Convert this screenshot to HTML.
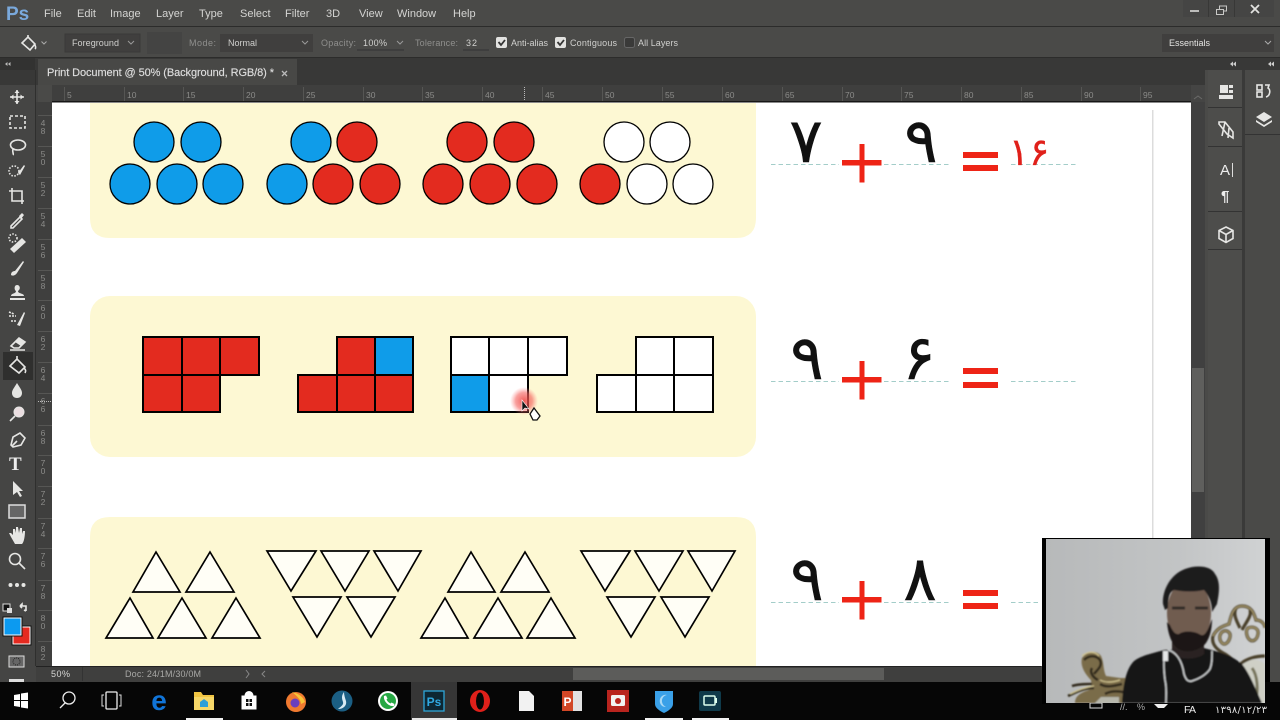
<!DOCTYPE html>
<html>
<head>
<meta charset="utf-8">
<style>
html,body{margin:0;padding:0;background:#000;width:1280px;height:720px;overflow:hidden}
svg{display:block}
text{font-family:"Liberation Sans",sans-serif}
.m{font-size:11px;fill:#d4d4d2}
.o{font-size:9px;fill:#d0d0ce}
.d{font-size:9px;fill:#8f8f8d}
.r{font-size:8.5px;fill:#8b8b89}
.n{font-family:"DejaVu Sans",sans-serif;font-size:62px;fill:#111;stroke:#111;stroke-width:.6;text-anchor:middle}
.c{stroke:#000;stroke-width:1.3}
.s{stroke:#000;stroke-width:2;fill:#fff}
.t{stroke:#000;stroke-width:1.7;fill:#fffef6;stroke-linejoin:miter}
.i{fill:none;stroke:#e6e6e4;stroke-width:1.6}
.f{fill:#e6e6e4}
</style>
</head>
<body>
<svg width="1280" height="720" viewBox="0 0 1280 720" xmlns="http://www.w3.org/2000/svg">
<defs>
<filter id="b1"><feGaussianBlur stdDeviation="0.9"/></filter>
<linearGradient id="wall" x1="0" y1="0" x2="1" y2="0"><stop offset="0" stop-color="#b7b9ba"/><stop offset="0.6" stop-color="#c2c4c5"/><stop offset="1" stop-color="#d0d2d3"/></linearGradient>
<radialGradient id="spot"><stop offset="0" stop-color="#f0403c" stop-opacity=".85"/><stop offset=".6" stop-color="#f4605c" stop-opacity=".6"/><stop offset="1" stop-color="#f88" stop-opacity="0"/></radialGradient>
</defs>

<!-- chrome -->
<rect width="1280" height="720" fill="#454544"/>
<rect y="0" width="1280" height="26" fill="#4a4a48"/>
<rect y="26" width="1280" height="1" fill="#2c2c2b"/>
<rect y="27" width="1280" height="30" fill="#4a4a48"/>
<rect y="57" width="1280" height="1" fill="#2c2c2b"/>
<rect x="0" y="58" width="1280" height="27" fill="#383837"/>
<rect x="0" y="58" width="35" height="12" fill="#323231"/>
<rect x="38" y="59" width="259" height="26" fill="#484846"/>
<rect x="38" y="85" width="1153" height="17" fill="#3f3f3e"/>
<rect x="38" y="85" width="14" height="17" fill="#4a4a48"/>
<rect x="36" y="102" width="16" height="564" fill="#3f3f3e"/>
<rect x="35" y="70" width="1" height="612" fill="#2f2f2e"/>

<!-- Menu -->
<text x="6" y="20" style="font-size:19px;font-weight:bold;fill:#7aa9dc">Ps</text>
<text x="44" y="17" class="m">File</text>
<text x="77" y="17" class="m">Edit</text>
<text x="110" y="17" class="m">Image</text>
<text x="156" y="17" class="m">Layer</text>
<text x="199" y="17" class="m">Type</text>
<text x="240" y="17" class="m">Select</text>
<text x="285" y="17" class="m">Filter</text>
<text x="326" y="17" class="m">3D</text>
<text x="359" y="17" class="m">View</text>
<text x="397" y="17" class="m">Window</text>
<text x="453" y="17" class="m">Help</text>

<!-- Window controls -->
<rect x="1183" y="0" width="91" height="17" fill="#454544"/>
<path d="M1208.500 0v17M1234.500 0v17" stroke="#383837"/>
<rect x="1190" y="10" width="9" height="2" fill="#bdbdbb"/>
<path d="M1216.500 9.500h7v5h-7zM1219.500 9v-3h7v5h-3" fill="none" stroke="#c8c8c6"/>
<path d="M1251 5l8 8M1259 5l-8 8" stroke="#e2e2e0" stroke-width="1.800"/>

<!-- Options -->
<g transform="translate(20,35)"><path d="M2 8l6-6 7 7-5 6z" class="i"/><path d="M8 2V0" class="i"/><path d="M14 9c2 2 2 4 1 5" class="i"/></g>
<path d="M41.500 41.500l2.500 2.500 2.500-2.500" fill="none" stroke="#aaa"/>
<rect x="65" y="34" width="75" height="18" fill="#403f3e" stroke="#3a3a39"/>
<text x="72" y="46" class="o" textLength="47">Foreground</text>
<path d="M128 41l3 3 3-3" fill="none" stroke="#999"/>
<rect x="147" y="32" width="35" height="22" fill="#444443"/>
<text x="189" y="46" class="d" textLength="27">Mode:</text>
<rect x="220" y="34" width="93" height="18" fill="#403f3e"/>
<text x="228" y="46" class="o" textLength="29">Normal</text>
<path d="M302 41l3 3 3-3" fill="none" stroke="#999"/>
<text x="321" y="46" class="d" textLength="35">Opacity:</text>
<text x="363" y="46" class="o" textLength="24">100%</text>
<path d="M357 50h47" stroke="#333"/>
<path d="M397 41l3 3 3-3" fill="none" stroke="#999"/>
<text x="415" y="46" class="d" textLength="43">Tolerance:</text>
<text x="466" y="46" class="o" textLength="11">32</text>
<path d="M463 50h26" stroke="#333"/>
<rect x="496" y="37" width="11" height="11" rx="2" fill="#e2e2e0"/><path d="M498.500 42l2.500 3 4-5" stroke="#333" stroke-width="1.800" fill="none"/>
<text x="511" y="46" class="o" textLength="37">Anti-alias</text>
<rect x="555" y="37" width="11" height="11" rx="2" fill="#e2e2e0"/><path d="M557.500 42l2.500 3 4-5" stroke="#333" stroke-width="1.800" fill="none"/>
<text x="570" y="46" class="o" textLength="47">Contiguous</text>
<rect x="624.500" y="37.500" width="10" height="10" rx="2" fill="#3a3a39" stroke="#666"/>
<text x="638" y="46" class="o" textLength="40">All Layers</text>
<rect x="1162" y="34" width="112" height="18" fill="#403f3e"/>
<text x="1169" y="46" class="o" style="fill:#e4e4e2" textLength="41">Essentials</text>
<path d="M1265 41l3 3 3-3" fill="none" stroke="#aaa"/>

<!-- tab -->
<path d="M5 64l2.500-2v4zM8 64l2.500-2v4" fill="#bbb"/>
<text x="47" y="76" style="font-size:11px;fill:#dedede;stroke:#dedede;stroke-width:.15" textLength="227">Print Document @ 50% (Background, RGB/8) *</text>
<path d="M282 71l5 5M287 71l-5 5" stroke="#bbb" stroke-width="1.300"/>

<!-- top ruler -->
<g>
<text x="67" y="98" class="r">5</text><text x="127" y="98" class="r">10</text><text x="186" y="98" class="r">15</text><text x="246" y="98" class="r">20</text><text x="306" y="98" class="r">25</text><text x="366" y="98" class="r">30</text><text x="425" y="98" class="r">35</text><text x="485" y="98" class="r">40</text><text x="545" y="98" class="r">45</text><text x="605" y="98" class="r">50</text><text x="665" y="98" class="r">55</text><text x="725" y="98" class="r">60</text><text x="785" y="98" class="r">65</text><text x="845" y="98" class="r">70</text><text x="904" y="98" class="r">75</text><text x="964" y="98" class="r">80</text><text x="1024" y="98" class="r">85</text><text x="1084" y="98" class="r">90</text><text x="1143" y="98" class="r">95</text>
</g>
<path d="M64.500 87v14M124.500 87v14M183.500 87v14M243.500 87v14M303.500 87v14M363.500 87v14M422.500 87v14M482.500 87v14M542.500 87v14M602.500 87v14M662.500 87v14M722.500 87v14M782.500 87v14M842.500 87v14M901.500 87v14M961.500 87v14M1021.500 87v14M1081.500 87v14M1140.500 87v14" stroke="#565654"/>
<path d="M524.500 87v14" stroke="#bbb" stroke-dasharray="1 1"/>

<!-- left ruler -->
<g style="text-anchor:middle">
<text x="43" y="126" class="r">4</text><text x="43" y="134" class="r">8</text>
<text x="43" y="157" class="r">5</text><text x="43" y="165" class="r">0</text>
<text x="43" y="188" class="r">5</text><text x="43" y="196" class="r">2</text>
<text x="43" y="219" class="r">5</text><text x="43" y="227" class="r">4</text>
<text x="43" y="250" class="r">5</text><text x="43" y="258" class="r">6</text>
<text x="43" y="281" class="r">5</text><text x="43" y="289" class="r">8</text>
<text x="43" y="311" class="r">6</text><text x="43" y="319" class="r">0</text>
<text x="43" y="342" class="r">6</text><text x="43" y="350" class="r">2</text>
<text x="43" y="373" class="r">6</text><text x="43" y="381" class="r">4</text>
<text x="43" y="404" class="r">6</text><text x="43" y="412" class="r">6</text>
<text x="43" y="436" class="r">6</text><text x="43" y="444" class="r">8</text>
<text x="43" y="466" class="r">7</text><text x="43" y="474" class="r">0</text>
<text x="43" y="497" class="r">7</text><text x="43" y="505" class="r">2</text>
<text x="43" y="529" class="r">7</text><text x="43" y="537" class="r">4</text>
<text x="43" y="559" class="r">7</text><text x="43" y="567" class="r">6</text>
<text x="43" y="591" class="r">7</text><text x="43" y="599" class="r">8</text>
<text x="43" y="621" class="r">8</text><text x="43" y="629" class="r">0</text>
<text x="43" y="652" class="r">8</text><text x="43" y="660" class="r">2</text>
</g>
<path d="M38 115.500h14M38 146.500h14M38 177.500h14M38 208.500h14M38 239.500h14M38 270.500h14M38 300.500h14M38 331.500h14M38 362.500h14M38 393.500h14M38 425.500h14M38 455.500h14M38 486.500h14M38 518.500h14M38 548.500h14M38 580.500h14M38 610.500h14M38 641.500h14" stroke="#565654"/>
<path d="M38 401.500h14" stroke="#bbb" stroke-dasharray="1 1"/>

<!-- canvas -->
<rect x="52" y="102" width="1139" height="564" fill="#fff"/>
<rect x="52" y="101" width="1139" height="1.500" fill="#161616"/>
<rect x="1152" y="110" width="1.500" height="428" fill="#dcdcdc"/>

<!-- cards -->
<path d="M90 103H756V218Q756 238 736 238H110Q90 238 90 218Z" fill="#fdf8d3"/>
<rect x="90" y="296" width="666" height="161" rx="20" fill="#fdf8d3"/>
<path d="M90 666V537Q90 517 110 517H736Q756 517 756 537V666Z" fill="#fdf8d3"/>

<!-- circles -->
<g class="c">
<g fill="#0f9ce9"><circle cx="154" cy="142" r="20"/><circle cx="201" cy="142" r="20"/><circle cx="130" cy="184" r="20"/><circle cx="177" cy="184" r="20"/><circle cx="223" cy="184" r="20"/><circle cx="311" cy="142" r="20"/><circle cx="287" cy="184" r="20"/></g>
<g fill="#e32b1f"><circle cx="357" cy="142" r="20"/><circle cx="333" cy="184" r="20"/><circle cx="380" cy="184" r="20"/><circle cx="467" cy="142" r="20"/><circle cx="514" cy="142" r="20"/><circle cx="443" cy="184" r="20"/><circle cx="490" cy="184" r="20"/><circle cx="537" cy="184" r="20"/><circle cx="600" cy="184" r="20"/></g>
<g fill="#fff"><circle cx="624" cy="142" r="20"/><circle cx="670" cy="142" r="20"/><circle cx="647" cy="184" r="20"/><circle cx="693" cy="184" r="20"/></g>
</g>

<!-- squares -->
<g class="s">
<rect x="143" y="337" width="39" height="38" style="fill:#e32b1f"/><rect x="182" y="337" width="38" height="38" style="fill:#e32b1f"/><rect x="220" y="337" width="39" height="38" style="fill:#e32b1f"/><rect x="143" y="375" width="39" height="37" style="fill:#e32b1f"/><rect x="182" y="375" width="38" height="37" style="fill:#e32b1f"/>
<rect x="337" y="337" width="38" height="38" style="fill:#e32b1f"/><rect x="298" y="375" width="39" height="37" style="fill:#e32b1f"/><rect x="337" y="375" width="38" height="37" style="fill:#e32b1f"/><rect x="375" y="375" width="38" height="37" style="fill:#e32b1f"/>
<rect x="375" y="337" width="38" height="38" style="fill:#0f9ce9"/>
<rect x="451" y="337" width="38" height="38"/><rect x="489" y="337" width="39" height="38"/><rect x="528" y="337" width="39" height="38"/>
<rect x="451" y="375" width="38" height="37" style="fill:#0f9ce9"/><rect x="489" y="375" width="39" height="37"/>
<rect x="636" y="337" width="38" height="38"/><rect x="674" y="337" width="39" height="38"/><rect x="597" y="375" width="39" height="37"/><rect x="636" y="375" width="38" height="37"/><rect x="674" y="375" width="39" height="37"/>
</g>
<circle cx="524" cy="401" r="14" fill="url(#spot)"/>
<path d="M522 400v11l3-3 4 1z" fill="#111" stroke="#fff" stroke-width=".6"/>
<path d="M530 414l4-6 6 8-3 4h-4z" fill="#fff" stroke="#111" stroke-width="1.300"/>

<!-- triangles -->
<g class="t">
<path d="M156 552L180 592H133Z"/><path d="M210 552L234 592H186Z"/><path d="M130 598L153 638H106Z"/><path d="M182 598L206 638H158Z"/><path d="M236 598L260 638H212Z"/>
<path d="M267 551H316L291 591Z"/><path d="M321 551H369L345 591Z"/><path d="M374 551H421L398 591Z"/><path d="M293 597H341L317 637Z"/><path d="M347 597H395L371 637Z"/>
<path d="M471 552L495 592H448Z"/><path d="M525 552L549 592H501Z"/><path d="M445 598L468 638H421Z"/><path d="M498 598L522 638H474Z"/><path d="M551 598L575 638H527Z"/>
<path d="M581 551H630L605 591Z"/><path d="M635 551H683L659 591Z"/><path d="M688 551H735L712 591Z"/><path d="M607 597H655L631 637Z"/><path d="M661 597H709L685 637Z"/>
</g>

<!-- equation rows -->
<g stroke="#a3cdc9" stroke-width="1" stroke-dasharray="4.500 3">
<path d="M771 164.500h68M884 164.500h65M1011 164.500h65"/>
<path d="M771 381.500h68M884 381.500h65M1011 381.500h65"/>
<path d="M771 602.500h68M884 602.500h65M1011 602.500h30"/>
</g>
<g fill="#ee2416">
<path d="M859.500 144h5v16h17v5.500h-17v17h-5v-17H842V160h17.500z"/>
<path d="M859.500 361h5v16h17v5.500h-17v17h-5v-17H842V377h17.500z"/>
<path d="M859.500 581h5v16h17v5.500h-17v17h-5v-17H842V597h17.500z"/>
<rect x="963" y="152" width="35" height="6"/><rect x="963" y="165" width="35" height="6"/>
<rect x="963" y="368" width="35" height="6"/><rect x="963" y="382" width="35" height="6"/>
<rect x="963" y="590" width="35" height="6"/><rect x="963" y="603" width="35" height="6"/>
</g>
<text x="806" y="162" class="n">۷</text>
<text x="921" y="162" class="n">۹</text>
<text x="807" y="379" class="n">۹</text>
<text x="919" y="379" class="n">۶</text>
<text x="807" y="600" class="n">۹</text>
<text x="920" y="600" class="n">۸</text>
<text x="1029" y="165" class="n" style="font-size:38px;fill:#e0201a;stroke:#e0201a;stroke-width:.3">۱۶</text>

<!-- right scrollbar & panels -->
<rect x="1191" y="102" width="14" height="436" fill="#404040"/>
<path d="M1194 99l4-3 4 3" fill="none" stroke="#6a6a68"/>
<rect x="1192" y="368" width="12" height="124" fill="#5f5f5d"/>
<rect x="1205" y="58" width="75" height="624" fill="#4a4a48"/>
<rect x="1205" y="58" width="75" height="12" fill="#383837"/>
<rect x="1208" y="70" width="34" height="612" fill="#4d4d4b"/>
<rect x="1242" y="70" width="3" height="612" fill="#3a3a39"/>
<path d="M1208 107.500h34M1208 146.500h34M1208 211.500h34M1208 249.500h34M1245 134.500h35" stroke="#333"/>
<path d="M1236 61.500l-3 2.500 3 2.500zM1233 61.500l-3 2.500 3 2.500zM1274 61.500l-3 2.500 3 2.500zM1271 61.500l-3 2.500 3 2.500z" fill="#ccc"/>
<g class="f"><rect x="1219" y="95" width="14" height="4"/><rect x="1220" y="85" width="8" height="8"/><rect x="1229" y="85" width="4" height="3"/><rect x="1229" y="90" width="4" height="3"/></g>
<g><rect x="1257" y="85" width="5" height="5" class="i"/><rect x="1257" y="92" width="5" height="5" class="i"/><path d="M1265 85h4l-1 3c3 2 2 8-2 9" class="i"/></g>
<path d="M1264 112l8 5-8 5-8-5z" class="f"/><path d="M1256 120l8 5 8-5v2l-8 5-8-5z" class="f"/>
<path d="M1219 124l8 10 6 4v-6l-8-10h-6zM1225 122l-3 14M1229 128l-1 10" class="i" stroke-width="1.200"/>
<text x="1220" y="175" style="font-size:15px;fill:#eee">A</text><rect x="1232" y="163" width="1" height="14" fill="#ddd"/>
<text x="1221" y="201" style="font-size:15px;font-weight:bold;fill:#eee">¶</text>
<path d="M1226 227l7 3.500v8l-7 4-7-4v-8zM1219 230.500l7 4 7-4M1226 234.500v8" class="i"/>

<!-- status bar -->
<rect x="0" y="666" width="36" height="16" fill="#454544"/>
<rect x="36" y="666" width="1005" height="1" fill="#222"/>
<rect x="36" y="667" width="1005" height="15" fill="#3f3f3e"/>
<rect x="573" y="668" width="311" height="12" fill="#5c5c5a"/>
<text x="51" y="677" class="o" textLength="19" style="fill:#d8d8d6">50%</text>
<text x="125" y="677" class="o" textLength="76" style="fill:#a8a8a6">Doc: 24/1M/30/0M</text>
<path d="M246 670l3 4-3 4M265 671l-3 3 3 3" fill="none" stroke="#888"/>
<path d="M82.500 667v14" stroke="#333"/>

<!-- tools -->
<rect x="3" y="352" width="30" height="28" fill="#2f2f2e"/>
<path d="M17 90v14M10 97h14" class="i"/><path d="M14.500 93l2.500-3 2.500 3M14.500 101l2.500 3 2.500-3M13.500 94.500l-3 2.500 3 2.500M20.500 94.500l3 2.500-3 2.500" fill="#e6e6e4"/>
<rect x="10" y="116" width="15" height="12" class="i" stroke-dasharray="3 2"/>
<ellipse cx="18" cy="145" rx="7.500" ry="5" class="i"/><path d="M13 149c-1 3 1 5 0 6" class="i"/>
<circle cx="14" cy="171" r="5" class="i" stroke-dasharray="1.500 1.500"/><path d="M18 173l6-8 1 1-5 9z" class="f"/>
<path d="M12 188v13h12M9 191h13v13" class="i" stroke-width="2"/>
<path d="M11 226l9-9 2 2-9 9h-2z" class="i"/><path d="M19 216l3-3 2 2-3 4z" class="f"/>
<path d="M10 249l12-11 4 4-12 11z" class="f"/><circle cx="13" cy="238" r="4" class="i" stroke-dasharray="1.500 1.500"/>
<path d="M11 275c0-3 2-4 4-4l8-10 1 1-7 11c-2 3-5 3-6 2z" class="f"/>
<path d="M10 298h15v2H10z" class="f"/><path d="M11 296c0-3 5-2 5-5-2-1-2-6 1-6s4 4 1 6c0 3 6 2 6 5z" class="f"/>
<path d="M17 325l7-13 1 1-5 13z" class="f"/><path d="M9 316h7M11 321h5M9 312l5 2" class="i" stroke-dasharray="2 1"/>
<path d="M11 346l8-8 6 4-6 6h-5zM10 350h15" class="i"/><path d="M19 338l6 4-4 4-6-4z" class="f"/>
<path d="M10 366l7-7 8 8-6 6zM17 359v-3M24 368c2 2 2 3 1 5" class="i"/>
<path d="M17 383c-3 5-5 7-5 10s2 5 5 5 5-2 5-5-2-5-5-10z" class="f"/>
<circle cx="19" cy="412" r="5" fill="#eadde0" stroke="#e6e6e4"/><path d="M15 416l-5 5" class="i" stroke-width="2"/>
<path d="M11 445l2-8 7-4 5 5-4 7-8 2zM12 446l5-5" class="i"/>
<text x="9" y="470" style="font-size:19px;font-weight:bold;font-family:'Liberation Serif',serif;fill:#eee">T</text>
<path d="M13 481v14l4-3 3 5 2-1-3-5h4z" class="f"/>
<rect x="9" y="505" width="16" height="13" fill="#666" stroke="#ddd" stroke-width="1.500"/>
<path d="M11 537l-2-4 2 0 2 2v-6l2 0 1 4v-6h2l1 6 1-5h2l0 6 1-3h2c0 5-1 11-3 13h-7z" class="f"/>
<circle cx="15" cy="559" r="5.500" class="i" stroke-width="2"/><path d="M19 563l6 6" class="i" stroke-width="2.500"/>
<circle cx="10.500" cy="585" r="2" class="f"/><circle cx="17" cy="585" r="2" class="f"/><circle cx="23.500" cy="585" r="2" class="f"/>
<rect x="3" y="604" width="7" height="7" fill="#111" stroke="#ddd"/><rect x="7" y="608" width="5" height="5" fill="#ddd"/>
<path d="M20 606l2-2v2h4v5M26 611l-2-1M20 606l2 2" class="i" stroke-width="1.200"/>
<rect x="13" y="627" width="17" height="17" fill="#e52a20" stroke="#fff"/><rect x="12" y="626" width="19" height="19" fill="none" stroke="#111"/>
<rect x="4" y="618" width="17" height="17" fill="#0c9af0" stroke="#fff"/><rect x="3" y="617" width="19" height="19" fill="none" stroke="#111"/>
<rect x="9" y="656" width="15" height="11" fill="#666" stroke="#ddd"/><circle cx="16.500" cy="661.500" r="3.500" fill="none" stroke="#222" stroke-dasharray="1 1"/>
<rect x="9" y="679" width="15" height="3" fill="#ddd"/>

<!-- taskbar -->
<rect x="0" y="682" width="1280" height="38" fill="#060606"/>
<rect x="411" y="682" width="46" height="38" fill="#363636"/>
<rect x="186" y="718" width="37" height="2" fill="#f2f2f2"/>
<rect x="412" y="718" width="45" height="2" fill="#e8e8e8"/>
<rect x="645" y="718" width="38" height="2" fill="#f2f2f2"/>
<rect x="692" y="718" width="37" height="2" fill="#f2f2f2"/>

<g fill="#fff"><path d="M14 695l6-1v6h-6zM21 693.500l7-1v7.500h-7zM14 701h6v6l-6-1zM21 701h7v7.500l-7-1z"/></g>
<circle cx="69" cy="698" r="6" fill="none" stroke="#eee" stroke-width="1.300"/><path d="M65 703l-5 5" stroke="#eee" stroke-width="1.300"/>
<rect x="106" y="692" width="11" height="17" rx="1" fill="none" stroke="#eee" stroke-width="1.300"/><path d="M104 695h-2v11h2M119 695h2v11h-2" fill="none" stroke="#ddd"/>
<text x="159" y="710" style="font-size:28px;font-weight:bold;fill:#1074d8;text-anchor:middle">e</text>
<path d="M194 692h7l2 3h11v4h-20z" fill="#f0c442"/><path d="M194 697h20v13h-20z" fill="#f6d768"/><path d="M200 702l4-3 4 3v5h-8z" fill="#2d9fd8"/>
<path d="M242 696h14v13h-14zM245 696c0-6 8-6 8 0" fill="#fff" stroke="#fff"/><path d="M246 699h2.500v3H246zM249.500 699h2.500v3h-2.500zM246 703h2.500v3H246zM249.500 703h2.500v3h-2.500z" fill="#111"/>
<circle cx="296" cy="702" r="10" fill="#f07a30"/><path d="M292 692c5 1 11 4 13 10l-4 2c0-4-4-8-9-12z" fill="#f8c437"/><circle cx="295" cy="703" r="4.500" fill="#6a3fc0"/>
<circle cx="342" cy="701" r="10.500" fill="#1b5f84"/><path d="M344 692c-3 4-2 7-1 10 1 3-3 5-5 7 6 0 9-4 8-8-1-3-2-6-2-9z" fill="#d8ecf5"/>
<circle cx="388" cy="701" r="10" fill="#fff"/><circle cx="388" cy="701" r="8" fill="#27a844"/><path d="M384 696l2-.5 1.500 3-1 1c1 2 2 3 4 4l1-1 3 1.500-.5 2c-5 1-11-5-10-10z" fill="#fff"/>
<rect x="424" y="691" width="20" height="20" fill="#0d2733" stroke="#2ea6d8" stroke-width="1.300"/>
<text x="434" y="706" style="font-size:12px;font-weight:bold;fill:#30a8e0;text-anchor:middle">Ps</text>
<ellipse cx="480" cy="701" rx="10" ry="11" fill="#e0201a"/><ellipse cx="480" cy="701" rx="4" ry="8.500" fill="#060606"/>
<path d="M519 691h10l5 5v15h-15z" fill="#f2f2f2"/>
<rect x="562" y="691" width="20" height="20" fill="#e2e2e2"/><path d="M562 691h11v20h-11z" fill="#d24726"/>
<text x="567.500" y="706" style="font-size:12px;font-weight:bold;fill:#fff;text-anchor:middle">P</text>
<rect x="607" y="690" width="22" height="22" fill="#b8241e"/><rect x="611" y="695" width="14" height="11" rx="1.500" fill="#f2f2f2"/><circle cx="618" cy="701" r="3" fill="#b8241e"/>
<path d="M655 691h18v13c0 4-5 7-9 9-4-2-9-5-9-9z" fill="#3aa0e8"/><path d="M667 695c-6 1-7 9-1 12-5 0-7-4-6-8 1-3 4-5 7-4z" fill="#a8d8f5"/>
<rect x="699" y="691" width="22" height="20" rx="2" fill="#0f3a4a"/><rect x="704" y="696" width="11" height="9" rx="1" fill="none" stroke="#dfe" stroke-width="1.500"/><rect x="715" y="698" width="2" height="5" fill="#dfe"/>

<!-- tray -->
<rect x="1090" y="703" width="12" height="5" fill="none" stroke="#ddd"/>
<text x="1120" y="710" style="font-size:9px;fill:#bbb">//.</text>
<text x="1137" y="710" style="font-size:9px;fill:#aaa">%</text>
<path d="M1154 704h14l-4 4h-6z" fill="#eee"/>
<text x="1184" y="713" style="font-size:10.500px;fill:#eee" textLength="12">FA</text>
<text x="1215" y="713" style="font-family:'DejaVu Sans',sans-serif;font-size:10px;fill:#e4e4e4" textLength="52">۱۳۹۸/۱۲/۲۳</text>

<!-- webcam -->
<rect x="1042" y="538" width="228" height="3" fill="#000"/>
<rect x="1042" y="538" width="4" height="166" fill="#000"/>
<rect x="1265" y="538" width="5" height="144" fill="#000"/>
<svg x="1046" y="539" width="219" height="164" viewBox="1046 539 219 164">
<rect x="1046" y="539" width="219" height="164" fill="url(#wall)"/>
<g filter="url(#b1)">
<!-- right chair -->
<path d="M1238 662c8-4 20-4 27 2v39h-8z" fill="#cfd0c6"/>
<path d="M1252 668c6 8 6 22 4 32" stroke="#77745c" stroke-width="3" fill="none"/>
<g fill="none" stroke="#4a3f2a" stroke-width="3.200">
<path d="M1213 636c4-8 10-10 16-12 2-8 4-18 13-18 10 0 12 8 14 14 5 0 9 4 9 8M1213 636c-2 8 4 14 12 18 6 4 10 8 14 10"/>
<path d="M1236 608c-3 6 0 12 4 20M1250 610c2 6-4 12-8 20"/>
<path d="M1222 632c4-3 9 0 8 5s-5 9-8 6-3-8 0-11zM1248 628c5-2 11 0 10 6s-5 8-8 6-5-9-2-12z"/>
<path d="M1240 664c8-6 16-8 25-8"/>
</g>
<g fill="none" stroke="#a99a6c" stroke-width="1.300">
<path d="M1213 636c4-8 10-10 16-12 2-8 4-18 13-18 10 0 12 8 14 14 5 0 9 4 9 8"/>
<path d="M1222 632c4-3 9 0 8 5s-5 9-8 6-3-8 0-11zM1248 628c5-2 11 0 10 6s-5 8-8 6-5-9-2-12z"/>
</g>
<!-- left chair -->
<path d="M1075 703c0-6 4-10 14-13 4-4 2-8 2-10-6-6-11-14-9-22 5-7 15-8 19-2 3 6 2 14 5 20l14 2h6v25z" fill="#7a6c4a"/>
<g fill="none" stroke="#332b1c" stroke-width="2.600">
<path d="M1084 660c5-5 12-5 16 0 3 6-3 10-6 14M1092 668c-3 5 2 10 6 12M1068 696c8-4 16-8 26-8M1072 686c6-2 14-2 20-2M1100 684c6 4 14 2 22 0M1105 694c5-3 12-3 18-2"/>
</g>
<g fill="none" stroke="#d3c692" stroke-width="1.200">
<path d="M1082 656c6-5 13-5 17 0M1070 694c8-4 16-7 24-8M1100 680c6 3 14 2 20 0"/>
</g>
<path d="M1095 703l6-6h18v6z" fill="#b7b7ac"/>
<!-- body -->
<path d="M1122 703c1-18 4-34 12-42 8-6 20-8 30-11l40-2c14 4 26 6 38 16 8 10 14 26 20 39z" fill="#171616"/>
<!-- neck -->
<path d="M1172 640h32v14c-8 6-24 6-32 0z" fill="#2b2420"/>
<!-- head -->
<ellipse cx="1189" cy="613" rx="22" ry="33" fill="#6f5b4f"/>
<path d="M1167 622c1 14 6 25 13 28 8 3 20 1 26-7 4-6 6-14 6-24l-4 10c-2 4-4 7-7 6-6-4-17-5-22-1-4 1-7-4-9-9z" fill="#1f1917"/>
<path d="M1163 604c-1-14 8-30 22-35 10-4 26-4 30 5 6 8 4 20 2 30l-5 8c0-10-3-16-8-22-8 2-20 2-30 0-5 2-6 8-6 18l-3 2z" fill="#1d1a1c"/>
<path d="M1172 608h13M1195 608h13" stroke="#332925" stroke-width="3"/>
<!-- earphone -->
<path d="M1165 652c-2 10-1 20 0 28 2 8 1 16 1 23M1168 650c8 2 14 10 16 24 2 6 4 8 8 7 6-2 14-6 18-12 2-5 2-10 2-18" fill="none" stroke="#cfd2d3" stroke-width="1.500"/>
<rect x="1163" y="651" width="5" height="10" fill="#e6e8e8"/>
</g>
</svg>
</svg>
</body>
</html>
